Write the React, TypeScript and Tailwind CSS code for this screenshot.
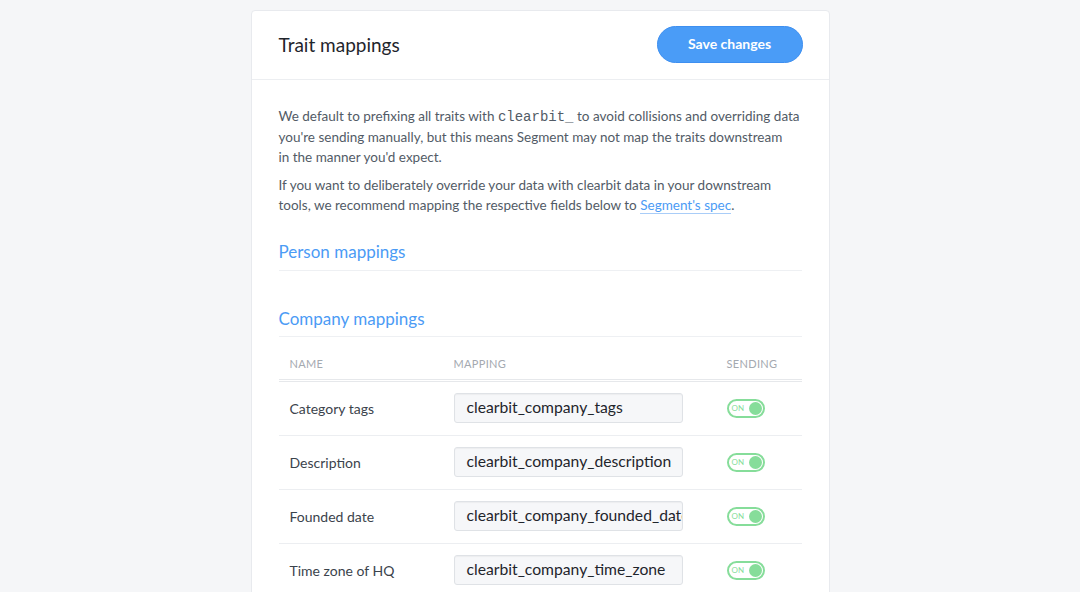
import { type ReactNode } from "react"

const ROWS = [
  { name: "Category tags", value: "clearbit_company_tags" },
  { name: "Description", value: "clearbit_company_description" },
  { name: "Founded date", value: "clearbit_company_founded_date" },
  { name: "Time zone of HQ", value: "clearbit_company_time_zone" },
]

function Toggle() {
  return (
    <div className="flex h-[19px] w-[38px] items-center justify-between rounded-full border-2 border-[#86dd9a] pl-[3px] pr-[1px]">
      <span className="text-[8px] leading-none text-[#86dd9a]">ON</span>
      <span className="h-[13px] w-[13px] rounded-full bg-[#86dd9a]" />
    </div>
  )
}

function Section({ children }: { children: ReactNode }) {
  return <h2 className="border-b border-[#eef0f3] pb-[5px] text-[17px] text-[#4b9bf5]">{children}</h2>
}

export default function App() {
  return (
    <div className="min-h-screen bg-[#f5f6f8] font-['Lato',sans-serif] text-[#525b66]">
      <div className="mx-auto w-[579px] pt-[10px]">
        <div className="rounded-t-[4px] border border-[#e8eaee] bg-white">
          <div className="flex h-[69px] items-center justify-between border-b border-[#eceef1] pl-[27px] pr-[26px]">
            <h1 className="text-[19px] text-[#1f252c]">Trait mappings</h1>
            <button className="-mt-[2px] h-[37px] w-[146px] rounded-full border border-[#3e8ff0] bg-[#4a9cf7] text-[14px] font-bold leading-none text-white">
              Save changes
            </button>
          </div>
          <div className="px-[27px] pt-[26px] pb-[20px]">
            <p className="text-[13.5px] leading-[20px]">
              We default to prefixing all traits with{" "}
              <code className="font-['Liberation_Mono',monospace] text-[14px] text-[#525b66]">clearbit_</code> to avoid
              collisions and overriding data you're sending manually, but this means Segment may not map the traits
              downstream in{"\u00a0"}the manner you'd expect.
            </p>
            <p className="mt-[8px] text-[13.5px] leading-[20px]">
              If you want to deliberately override your data with clearbit data in your downstream tools, we recommend
              mapping the respective fields below to{" "}
              <a className="border-b border-[#a9cdf8] text-[#4b9bf5]">Segment's spec</a>.
            </p>
            <div className="mt-[24px]">
              <Section>Person mappings</Section>
            </div>
            <div className="mt-[35px]">
              <Section>Company mappings</Section>
            </div>
            <div className="grid grid-cols-[164px_273px_1fr] border-b-[3px] border-double border-[#e6e8eb] pl-[11px] pt-[19px] pb-[6px] text-[11px] tracking-[0.03em] text-[#a4a9b0]">
              <span>NAME</span>
              <span>MAPPING</span>
              <span>SENDING</span>
            </div>
            {ROWS.map((r) => (
              <div
                key={r.name}
                className="grid h-[54px] grid-cols-[164px_273px_1fr] items-center border-b border-[#eceef1] pl-[11px] text-[14px] text-[#3b434c]"
              >
                <span>{r.name}</span>
                <div className="flex h-[30px] w-[229px] items-center overflow-hidden whitespace-nowrap rounded-[3px] border border-[#dfe2e6] bg-[#f6f7f9] px-[12px] text-[15.7px] text-[#1f252c] shadow-[inset_0_1px_1px_rgba(0,0,0,0.04)]">
                  {r.value}
                </div>
                <Toggle />
              </div>
            ))}
          </div>
        </div>
      </div>
    </div>
  )
}
